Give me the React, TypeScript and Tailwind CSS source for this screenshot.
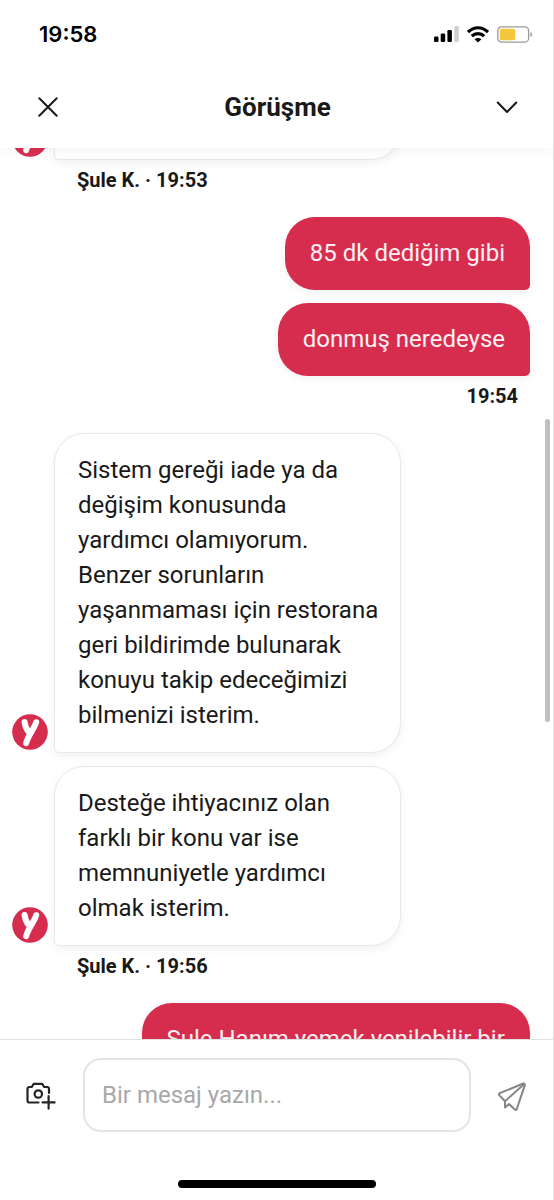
import type { ReactNode } from "react";

function SignalIcon() {
  return (
    <svg width="25" height="16" viewBox="0 0 25 16" aria-hidden="true">
      <rect x="0" y="10.5" width="4.5" height="5.5" rx="1.2" />
      <rect x="6.7" y="7.5" width="4.5" height="8.5" rx="1.2" />
      <rect x="13.4" y="4" width="4.5" height="12" rx="1.2" />
      <rect x="20.3" y="0" width="4.5" height="16" rx="1.2" fill="#cfcfcf" />
    </svg>
  );
}

function WifiIcon() {
  return (
    <svg width="22" height="17" viewBox="0 0 22 17" fill="none" stroke="black" strokeWidth="3.2" aria-hidden="true">
      <path d="M1 6.1C6.8 .3 15.2 .3 21 6.1" />
      <path d="M4.8 10.2C8.4 6.7 13.6 6.7 17.2 10.2" />
      <path d="M7.6 13.2C9.5 11.5 12.5 11.5 14.4 13.2L11 16.6Z" fill="black" stroke="none" />
    </svg>
  );
}

function BatteryIcon() {
  return (
    <svg width="36" height="17" viewBox="0 0 36 17" aria-hidden="true">
      <rect x=".8" y=".8" width="30.8" height="15.4" rx="4" fill="none" stroke="#9a9a9c" strokeWidth="1.3" />
      <rect x="2.8" y="2.8" width="15.4" height="11.4" rx="2" fill="#f3c83c" />
      <path d="M33.4 6C35.6 6.8 35.6 10.2 33.4 11Z" fill="#9a9a9c" />
    </svg>
  );
}

function CameraPlusIcon() {
  return (
    <svg width="30" height="28" viewBox="0 0 30 28" fill="none" stroke="#242424" strokeWidth="2.2" strokeLinecap="round" strokeLinejoin="round" aria-hidden="true">
      <path d="M12.5 20.5H3.5Q1.5 20.5 1.5 18.5V7Q1.5 5 3.5 5H5.7L7.7 1.8H16.2L18.2 5H21Q23 5 23 7V11" />
      <circle cx="12.3" cy="12" r="3.7" />
      <path d="M22.6 14.2V26.6M16.6 20.4H28.6" />
    </svg>
  );
}

function SendIcon() {
  return (
    <svg width="28" height="30" viewBox="0 0 28 30" fill="none" stroke="#858585" strokeWidth="2" strokeLinecap="round" strokeLinejoin="round" aria-hidden="true">
      <path d="M1.8 11.2Q.6 11.9 1.2 13.1L7 19.2V25.5L11 22L17 27.7Q18.2 28.4 18.8 27L26.8 3.1Q27 1.3 25.2 1.5Z" />
      <path d="M7 19.2L26 2.2" />
    </svg>
  );
}

function Avatar() {
  return (
    <svg width="36" height="36" viewBox="0 0 36 36" className="mb-[3px] shrink-0" aria-hidden="true">
      <circle cx="18" cy="18" r="17.8" fill="#d62d4e" />
      <path d="M12.6 8C13 12 14.6 15.6 17 18.4M24.2 8.2C22 15.6 16 21 14.2 29.2" fill="none" stroke="white" strokeWidth="6" strokeLinecap="round" />
    </svg>
  );
}

function AgentMessage({ children }: { children: ReactNode }) {
  return (
    <div className="flex w-3/4 items-end gap-1.5">
      <Avatar />
      <p className="min-h-[73px] flex-1 rounded-[30px] rounded-bl-[5px] border border-[#e8e8e8] bg-white py-[19px] pr-4 pl-[23px] shadow-[0_3px_10px_rgba(0,0,0,0.06)]">
        {children}
      </p>
    </div>
  );
}

function UserMessage({ children, wide = false }: { children: ReactNode; wide?: boolean }) {
  return (
    <p
      className={`${wide ? "w-3/4" : "max-w-3/4"} self-end rounded-[30px] rounded-br-[5px] bg-[#d62d4e] px-[25px] py-[19px] text-[#fdf0f3] shadow-[0_3px_10px_rgba(0,0,0,0.06)]`}
    >
      {children}
    </p>
  );
}

function Group({ meta, mine = false, children }: { meta?: string; mine?: boolean; children: ReactNode }) {
  return (
    <section className="mb-[25px]">
      <div className="flex flex-col gap-[13px]">{children}</div>
      {meta && (
        <div className={`mt-2 text-xl leading-6 font-bold ${mine ? "pr-3 text-right" : "pl-[65px]"}`}>{meta}</div>
      )}
    </section>
  );
}

export default function App() {
  return (
    <div className="relative flex h-screen flex-col overflow-hidden border-r border-[#e2e2e2] bg-white font-['Roboto',sans-serif] text-2xl leading-[35px] text-[#191919]">
      {/* Status bar */}
      <div className="relative z-20 flex h-[68px] shrink-0 items-center justify-between bg-white pr-5 pl-[39px]">
        <span className="font-['Inter',sans-serif] text-[22px] font-semibold text-black">19:58</span>
        <div className="flex items-center gap-2">
          <SignalIcon />
          <WifiIcon />
          <BatteryIcon />
        </div>
      </div>

      {/* Header */}
      <header className="relative z-10 flex h-20 shrink-0 items-center justify-between bg-white pr-[34px] pb-0.5 pl-9 shadow-[0_2px_14px_rgba(150,60,80,0.07)]">
        <button type="button" aria-label="Kapat" className="flex size-6 items-center justify-center">
          <svg width="20" height="20" viewBox="0 0 20 20" fill="none" stroke="#191919" strokeWidth="2" strokeLinecap="round" aria-hidden="true">
            <path d="M1.3 1.3L18.7 18.7M18.7 1.3L1.3 18.7" />
          </svg>
        </button>
        <h1 className="text-[26px] leading-8 font-bold">Görüşme</h1>
        <button type="button" aria-label="Küçült" className="flex size-6 items-center justify-center">
          <svg width="22" height="13" viewBox="0 0 22 13" fill="none" stroke="#191919" strokeWidth="2" strokeLinecap="round" strokeLinejoin="round" aria-hidden="true">
            <path d="M1.7 1.5L11 11L20.3 1.5" />
          </svg>
        </button>
      </header>

      {/* Conversation, scrolled part way */}
      <main className="relative min-h-0 flex-1 overflow-hidden">
        <div className="-mt-[61px] pr-[23px] pl-3">
          <Group meta="Şule K. · 19:53">
            <AgentMessage>{null}</AgentMessage>
          </Group>
          <Group meta="19:54" mine>
            <UserMessage>85 dk dediğim gibi</UserMessage>
            <UserMessage>donmuş neredeyse</UserMessage>
          </Group>
          <Group meta="Şule K. · 19:56">
            <AgentMessage>
              Sistem gereği iade ya da değişim konusunda yardımcı olamıyorum.
              <br />
              Benzer sorunların yaşanmaması için restorana geri bildirimde bulunarak konuyu takip edeceğimizi bilmenizi
              isterim.
            </AgentMessage>
            <AgentMessage>
              Desteğe ihtiyacınız olan farklı bir konu var ise memnuniyetle yardımcı olmak isterim.
            </AgentMessage>
          </Group>
          <Group>
            <UserMessage wide>Şule Hanım yemek yenilebilir bir</UserMessage>
          </Group>
        </div>
        {/* Scroll thumb */}
        <div className="absolute top-[271px] right-[3px] h-[303px] w-[5px] rounded-full bg-[#bfbfbf]" />
      </main>

      {/* Composer */}
      <footer className="shrink-0 border-t border-[#e0e0e0] bg-white pb-3">
        <form className="flex items-center pt-[18px] pr-[27px] pl-[26px]" onSubmit={(e) => e.preventDefault()}>
          <button type="button" aria-label="Fotoğraf ekle" className="shrink-0 pt-0.5">
            <CameraPlusIcon />
          </button>
          <input
            type="text"
            aria-label="Mesaj"
            placeholder="Bir mesaj yazın..."
            className="mx-[27px] h-[74px] min-w-0 flex-1 rounded-[18px] border-2 border-[#e4e4e4] bg-white px-[17px] outline-none placeholder:text-[#a8a8a8]"
          />
          <button type="submit" aria-label="Gönder" className="shrink-0 pt-1">
            <SendIcon />
          </button>
        </form>
        <div className="mx-auto mt-12 h-2 w-[198px] rounded-full bg-black" />
      </footer>
    </div>
  );
}
